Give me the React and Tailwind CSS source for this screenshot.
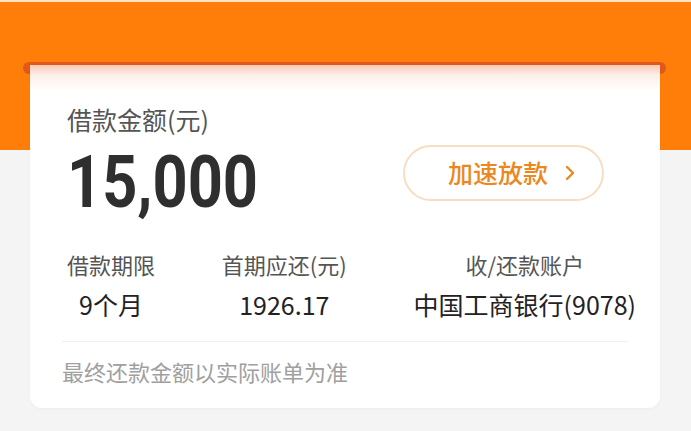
export default function App() {
  const cjk = { fontFamily: '"Noto Sans CJK SC", "Noto Sans", sans-serif' };

  const infoCols = [
    { label: '借款期限', value: '9个月' },
    { label: '首期应还(元)', value: '1926.17' },
    { label: '收/还款账户', value: '中国工商银行(9078)' },
  ];

  return (
    <div className="w-[691px] h-[431px] overflow-hidden bg-[#f4f4f4] relative" style={cjk}>
      {/* Orange header */}
      <div className="h-[150px] bg-[#ff7d09] border-t-2 border-[#fbe3c4]">
        <div className="h-[60px]" />
        {/* Slot */}
        <div className="ml-[23px] mr-[25px] h-[12px] rounded-full bg-[#e0581a]" />
      </div>

      {/* Card */}
      <div className="relative -mt-[85px] mx-[30px] w-[630px] h-[343px] rounded-b-[12px] bg-[linear-gradient(to_bottom,#f7c9b6_0px,#fdeee8_10px,#ffffff_26px)] shadow-[0_1px_3px_rgba(0,0,0,0.03)]">
        <div className="pt-[38px] pl-[37px] pr-[24px]">
          <div className="text-[25px] leading-[32px] text-[#555555]">借款金额(元)</div>
          <div className="flex items-start justify-between mt-[10px]">
            <div
              className="mt-[7px] h-[60px] text-[73px] leading-[60px] font-bold text-[#2f2f2f] origin-left scale-x-[0.84] whitespace-nowrap"
              style={{ fontFamily: 'Roboto, sans-serif' }}
            >
              15,000
            </div>
            <div className="mr-[32px] w-[201px] h-[56px] pl-[16px] rounded-full border-2 border-[#f7dec2] flex items-center justify-center gap-[17px] text-[#ec8720]">
              <span className="text-[25px] font-medium">加速放款</span>
              <svg width="10" height="16" viewBox="0 0 10 16" fill="none">
                <path d="M2 2l6 6-6 6" stroke="#ec8720" strokeWidth="2.4" strokeLinecap="round" strokeLinejoin="round" />
              </svg>
            </div>
          </div>
        </div>

        <div className="mt-[37px] ml-[37px] mr-[24px] flex justify-between">
          {infoCols.map((c) => (
            <div key={c.label} className="flex flex-col items-center">
              <div className="text-[22px] leading-[30px] text-[#555555]">{c.label}</div>
              <div className="mt-[10px] text-[25px] leading-[30px] text-[#222222]">{c.value}</div>
            </div>
          ))}
        </div>

        <div className="mt-[22px] mx-[32px] h-px bg-[#f0f0f0]" />

        <div className="mt-[14px] ml-[32px] text-[22px] leading-[30px] text-[#a0a0a0]">
          最终还款金额以实际账单为准
        </div>
      </div>
    </div>
  );
}
